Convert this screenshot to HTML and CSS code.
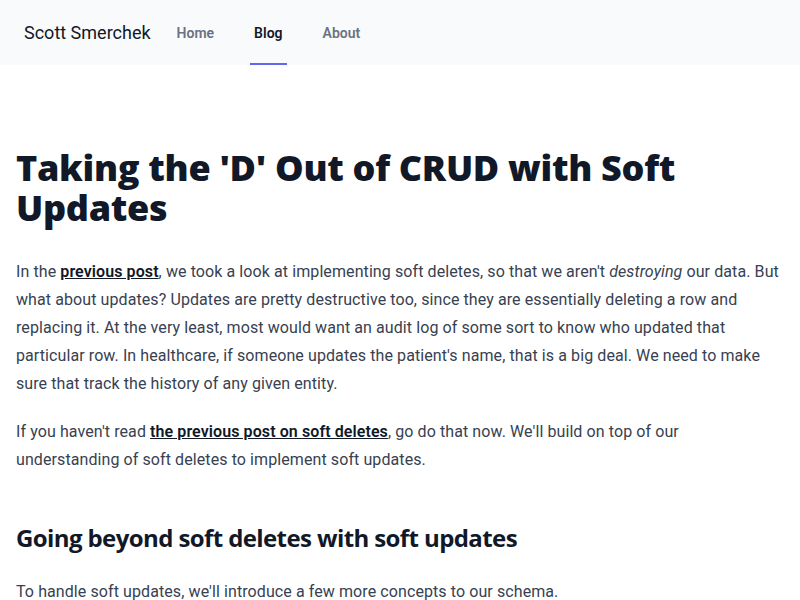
FILE: index.html
```html
<!DOCTYPE html>
<html lang="en">
<head>
<meta charset="utf-8">
<title>Taking the 'D' Out of CRUD with Soft Updates</title>
<link rel="stylesheet" href="styles.css">
</head>
<body>
<header class="site-header">
  <div class="brand">Scott Smerchek</div>
  <nav class="nav">
    <a class="nav-link" href="#">Home</a>
    <a class="nav-link active" href="#">Blog</a>
    <a class="nav-link" href="#">About</a>
  </nav>
</header>
<main class="content">
  <article class="prose">
    <h1>Taking the 'D' Out of CRUD with Soft Updates</h1>
    <p>In the <a href="#">previous post</a>, we took a look at implementing soft deletes, so that we aren't <em>destroying</em> our data. But what about updates? Updates are pretty destructive too, since they are essentially deleting a row and replacing it. At the very least, most would want an audit log of some sort to know who updated that particular row. In healthcare, if someone updates the patient's name, that is a big deal. We need to make sure that track the history of any given entity.</p>
    <p>If you haven't read <a href="#">the previous post on soft deletes</a>, go do that now. We'll build on top of our understanding of soft deletes to implement soft updates.</p>
    <h2>Going beyond soft deletes with soft updates</h2>
    <p>To handle soft updates, we'll introduce a few more concepts to our schema.</p>
  </article>
</main>
</body>
</html>
```
FILE: styles.css
```css
* { box-sizing: border-box; }
body {
  margin: 0;
  font-family: "Roboto", "Open Sans", sans-serif;
  background: #ffffff;
  color: #374151;
}
.site-header {
  height: 65px;
  background: #f9fafb;
  display: flex;
  align-items: stretch;
  padding: 0 24px;
}
.brand {
  display: flex;
  align-items: center;
  font-size: 18px;
  color: #111827;
  margin-right: 22px;
}
.nav {
  display: flex;
  gap: 32px;
}
.nav-link {
  display: inline-flex;
  align-items: center;
  padding: 2px 4px 0;
  border-bottom: 2px solid transparent;
  font-size: 14px;
  font-weight: 600;
  color: #6b7280;
  text-decoration: none;
}
.nav-link.active {
  color: #111827;
  border-bottom-color: #6366f1;
}
.content {
  padding: 83px 16px 40px;
}
.prose {
  font-size: 16px;
  line-height: 28px;
  letter-spacing: 0.09px;
}
.prose h1 {
  margin: 0 0 30px;
  font-family: "Open Sans", "Roboto", sans-serif;
  font-size: 36px;
  line-height: 40px;
  font-weight: 800;
  color: #111827;
  letter-spacing: -0.3px;
}
.prose h2 {
  margin: 48px 0 24px;
  font-family: "Open Sans", "Roboto", sans-serif;
  font-size: 24px;
  line-height: 32px;
  font-weight: 700;
  color: #111827;
  letter-spacing: -0.6px;
}
.prose p {
  margin: 20px 0;
}
.prose h1 + p { margin-top: 0; }
.prose h2 + p { margin-top: 0; }
.prose a {
  color: #111827;
  font-weight: 600;
  text-decoration: underline;
}
```
